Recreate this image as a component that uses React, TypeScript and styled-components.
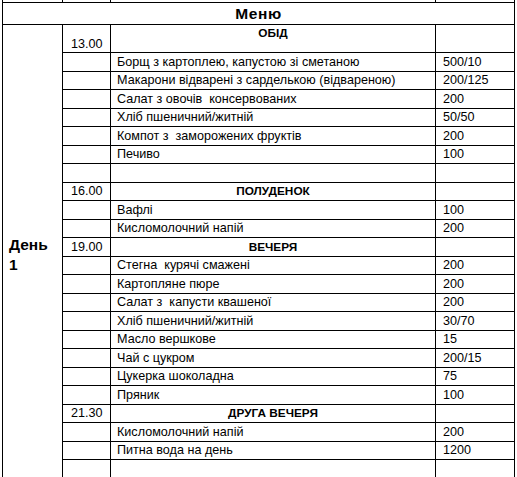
import React from 'react';
import styled, { createGlobalStyle } from 'styled-components';

type MenuRow = {
  time?: string;
  name?: string;
  amount?: string;
  heading?: boolean;
  tall?: boolean;
  last?: boolean;
};

const ROWS: MenuRow[] = [
  { time: '13.00', name: 'ОБІД', heading: true, tall: true },
  { name: 'Борщ з картоплею, капустою зі сметаною', amount: '500/10' },
  { name: 'Макарони відварені з сарделькою (відвареною)', amount: '200/125' },
  { name: 'Салат з овочів  консервованих', amount: '200' },
  { name: 'Хліб пшеничний/житній', amount: '50/50' },
  { name: 'Компот з  заморожених фруктів', amount: '200' },
  { name: 'Печиво', amount: '100' },
  {},
  { time: '16.00', name: 'ПОЛУДЕНОК', heading: true },
  { name: 'Вафлі', amount: '100' },
  { name: 'Кисломолочний напій', amount: '200' },
  { time: '19.00', name: 'ВЕЧЕРЯ', heading: true },
  { name: 'Стегна  курячі смажені', amount: '200' },
  { name: 'Картопляне пюре', amount: '200' },
  { name: 'Салат з  капусти квашеної', amount: '200' },
  { name: 'Хліб пшеничний/житній', amount: '30/70' },
  { name: 'Масло вершкове', amount: '15' },
  { name: 'Чай с цукром', amount: '200/15' },
  { name: 'Цукерка шоколадна', amount: '75' },
  { name: 'Пряник', amount: '100' },
  { time: '21.30', name: 'ДРУГА ВЕЧЕРЯ', heading: true },
  { name: 'Кисломолочний напій', amount: '200' },
  { name: 'Питна вода на день', amount: '1200' },
  { last: true },
];

const App = () => (
  <>
    <GlobalStyle />
    <Sheet>
      <MenuTable>
        <colgroup>
          <col style={{ width: 60 }} />
          <col style={{ width: 48 }} />
          <col style={{ width: 325 }} />
          <col style={{ width: 79 }} />
        </colgroup>
        <tbody>
          <PrevRow>
            <td />
            <td />
            <td />
            <td />
          </PrevRow>
          <TitleRow>
            <TitleCell colSpan={4}>Меню</TitleCell>
          </TitleRow>
          {ROWS.map((row, index) => (
            <Row key={index} $tall={row.tall} $last={row.last}>
              {index === 0 && <DayCell rowSpan={ROWS.length}>День<br />1</DayCell>}
              <TimeCell $bottom={row.tall}>{row.time}</TimeCell>
              {row.heading
                ? <HeadingCell $top={row.tall}>{row.name}</HeadingCell>
                : <NameCell>{row.name}</NameCell>}
              <AmountCell>{row.amount}</AmountCell>
            </Row>
          ))}
        </tbody>
      </MenuTable>
    </Sheet>
  </>
);

const GlobalStyle = createGlobalStyle`
  html, body {
    margin: 0;
    padding: 0;
    background: #fff;
    overflow: hidden;
  }

  body {
    font-family: "Liberation Sans", Arial, sans-serif;
    color: #000;
  }
`;

const Sheet = styled.div`
  height: 477px;
  overflow: hidden;
  padding-left: 2px;
`;

const MenuTable = styled.table`
  border-collapse: collapse;
  table-layout: fixed;
  width: 513px;
  margin-top: -9px;
  font-size: 12.6px;

  td {
    border: 1px solid #000;
    padding: 0 6px;
    white-space: pre;
    overflow: hidden;
  }
`;

const PrevRow = styled.tr`
  td {
    height: 10px;
    padding: 0;
  }
`;

const TitleRow = styled.tr`
  height: 22px;
`;

const TitleCell = styled.td`
  && {
    text-align: center;
    font-weight: bold;
    font-size: 15.5px;
    letter-spacing: 0.6px;
    vertical-align: middle;
    padding-top: 1px;
  }
`;

const Row = styled.tr<{ $tall?: boolean; $last?: boolean }>`
  height: ${({ $tall, $last }) => ($tall ? '28px' : $last ? '25px' : '18.5px')};
`;

const DayCell = styled.td`
  && {
    font-weight: bold;
    font-size: 15.5px;
    line-height: 20px;
    vertical-align: middle;
    padding-left: 6px;
  }
`;

const TimeCell = styled.td<{ $bottom?: boolean }>`
  && {
    vertical-align: ${({ $bottom }) => ($bottom ? 'bottom' : 'middle')};
    padding-left: 8px;
    padding-bottom: ${({ $bottom }) => ($bottom ? '1px' : '0')};
  }
`;

const NameCell = styled.td`
  vertical-align: middle;
`;

const HeadingCell = styled.td<{ $top?: boolean }>`
  && {
    text-align: center;
    font-weight: bold;
    font-size: 11.8px;
    vertical-align: ${({ $top }) => ($top ? 'top' : 'middle')};
    padding-top: ${({ $top }) => ($top ? '1px' : '0')};
  }
`;

const AmountCell = styled.td`
  && {
    vertical-align: middle;
    padding-left: 7px;
  }
`;

export default App;
